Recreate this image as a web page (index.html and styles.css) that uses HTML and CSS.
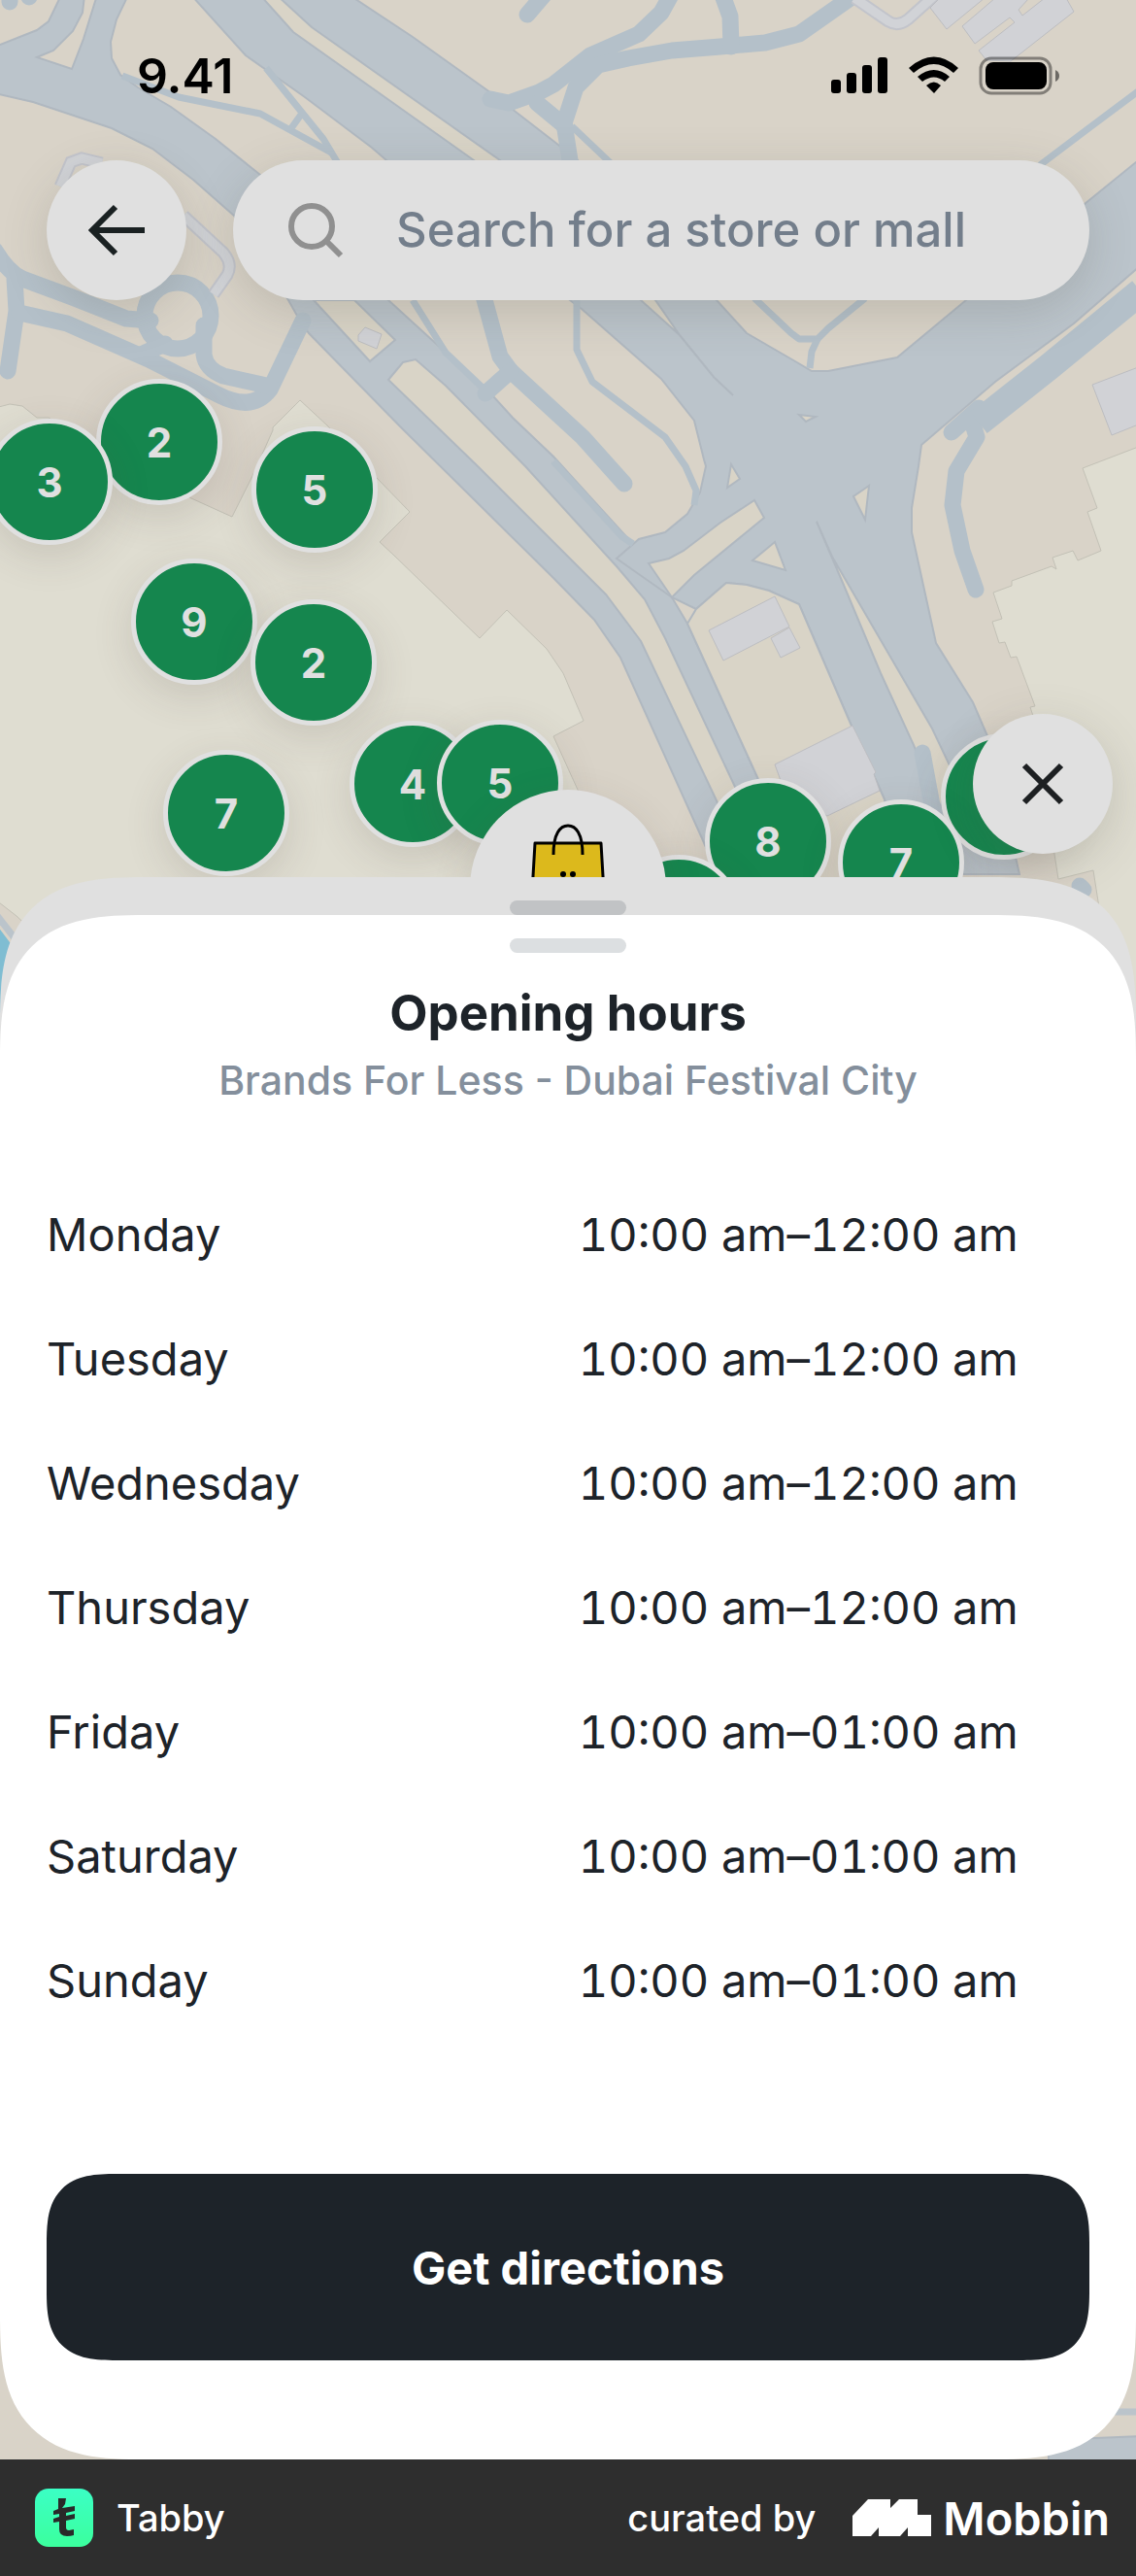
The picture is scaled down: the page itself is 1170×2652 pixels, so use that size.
FILE: index.html
```html
<!DOCTYPE html>
<html lang="en">
<head>
    <meta charset="UTF-8">
    <meta name="viewport" content="width=device-width, initial-scale=1.0">
    <title>Opening hours</title>
    <link rel="stylesheet" href="styles.css">
</head>
<body>
    <main class="screen">
        <div class="map">
            <svg class="map-art" viewBox="0 0 1170 2532" preserveAspectRatio="xMidYMin slice" aria-hidden="true">
                <!-- malls -->
                <g class="mall">
                    <path d="M-5 420L10 416L23 418L38 430L50 430L120 470L197 513L239 532L260 490L281 443V440L309 412L337 438L388 492L422 527L391 558L405 571L494 657L522 628L563 668L580 693L601 742L570 758L595 813L640 960H35L17 943L-5 926Z"/>
                    <path d="M1175 459L1115 482L1130 523L1120 527L1134 567L1110 577L1105 567L1084 574L1088 586L1083 583L1042 598V603L1023 610L1032 637L1022 640L1029 662L1035 661L1041 677L1047 676L1066 727L1061 728L1064 737L1090 905L1126 896L1136 960L1175 1100Z"/>
                </g>
                <!-- motorways -->
                <g class="road">
                    <path d="M-5 48L0 46L38 31L50 22L63 -5H87L85 13L75 32L55 52L38 59L74 71L86 40L100 -5H132L120 20L114 43L115 60L124 77L142 90L176 110L222 143L268 180L400 309L469 372L498 397L528 430L570 470L650 558L692 615L708 642L780 800L850 960H765L723 863L639 677L612 638L570 595L413 440L318 343L306 325L297 309L241 222L199 185L157 153L115 132L34 105L-5 96Z"/>
                    <path d="M197 -5L253 57L314 100L383 152L398 165L587 309L599 318L681 390L715 433L725 473L727 480L721 507L708 529L685 548L658 555L635 575L692 615L717 627L748 600L769 602L792 608L823 622L876 745L911 823L940 900H1050L1018 760L1002 723L964 662L939 548V523L946 480L949 458L1025 393L1106 333L1175 273V163L1117 210L995 309L924 368L853 382H836L819 372L769 343L738 309L593 163L509 98L425 38L360 -5Z"/>
                </g>
                <!-- islands between the carriageways -->
                <g class="island">
                    <path d="M268 -5L302 33L488 165L660 309L700 345L675 309L515 165L321 28L285 -5Z"/>
                    <path d="M323 309L381 372L407 350L365 309Z"/>
                    <path d="M400 391L415 373L428 370L459 397L541 480L635 583L664 617L685 657L757 810L820 960H800L736 820L660 660L624 612L570 558L492 480Z"/>
                    <path d="M668 580L689 575L704 567L742 538L777 515L787 533L715 592L692 615Z"/>
                    <path d="M708 642L717 627L748 600L769 602L792 608L823 622L876 745L911 823L930 960H850L780 800Z"/>
                    <path d="M841 537L857 573L960 750L979 790L968 833L941 767L907 693L868 600Z"/>
                    <path d="M753 478L762 493L749 502Z"/>
                    <path d="M895 500L879 511L891 535Z"/>
                    <path d="M798 558L775 577L809 587Z"/>
                    <path d="M823 427L840 429L830 434Z"/>
                </g>
                <path class="seam" d="M700 345L735 388L755 407"/>
                <!-- side streets -->
                <g class="street">
                    <path d="M-5 258Q8 280 23 287L77 307L130 328L155 330"/>
                    <path d="M15 287L17 320L8 382"/>
                    <path d="M20 322L69 333L153 370L226 407Q260 424 278 401L312 330"/>
                    <path d="M210 335V365Q212 380 230 387L279 398"/>
                    <path d="M145 365L170 354"/>
                    <circle cx="183" cy="325" r="34"/>
                    <path d="M498 305L515 367L526 382L600 450L643 498"/>
                    <path d="M526 382L500 405"/>
                    <path d="M691 -5L681 13L658 35L608 57L570 87L555 95L524 106L505 102"/>
                    <path d="M880 -5L823 35L788 44L742 48L692 52L647 60L616 67L593 90L581 127L587 165"/>
                    <path d="M744 -5L752 17L753 48"/>
                    <path d="M553 106L582 130"/>
                    <path d="M566 -12L543 15"/>
                    <path d="M10 -5V2M30 -5V-3"/>
                    <path d="M1003 440L1006 450L985 485L981 520L991 567L1005 607"/>
                    <path d="M1008 420L980 445"/>
                    <path d="M950 775L962 840"/>
                    <path class="wide" d="M1175 300L1080 378L1008 435"/>
                    <path d="M1112 912L1116 916"/>
                </g>
                <g class="lane">
                    <path d="M126 78L184 100L268 117L341 157"/>
                    <path d="M274 70L333 143L348 168"/>
                    <path d="M300 132L310 118"/>
                    <path d="M589 130L629 168"/>
                    <path d="M1071 170L1120 133L1175 92"/>
                    <path d="M777 307L815 343L823 349H842L853 338L891 307"/>
                    <path d="M842 349L836 362L834 379"/>
                    <path d="M594 309V360L610 393L685 450L706 480L717 505L715 520"/>
                    <path d="M425 309L459 363L498 400"/>
                    <path d="M570 475L640 552L652 560"/>
                </g>
                <!-- footpaths -->
                <g class="path-edge">
                    <path d="M62 192L73 167L84 163L105 168"/>
                    <path d="M189 222L230 260Q240 272 234 283L220 303"/>
                    <path d="M880 -2L915 22Q925 28 935 20L963 -5"/>
                </g>
                <g class="path-fill">
                    <path d="M62 192L73 167L84 163L105 168"/>
                    <path d="M189 222L230 260Q240 272 234 283L220 303"/>
                    <path d="M880 -2L915 22Q925 28 935 20L963 -5"/>
                </g>
                <!-- buildings -->
                <g class="building">
                    <path d="M958 8L968 -2H1014L975 30Z"/>
                    <path d="M991 27L1025 -2H1060L1049 10L1053 16L1076 -2H1098L1106 12L1041 63L1016 62L1008 52L1045 23L1040 18L1004 45Z"/>
                    <path d="M1125 396L1175 377V436L1145 448Z"/>
                    <path d="M730 649L798 614L813 645L745 680Z"/>
                    <path d="M794 657L813 646L824 667L804 677Z"/>
                    <path d="M798 787L878 747L902 795L900 797L906 814L852 840L810 820Z"/>
                    <path d="M369 345L376 337L393 344L388 359L369 351Z"/>
                </g>
                <!-- creek and the roads under the sheet corners -->
                <path class="water" d="M-5 950L25 990V1100H-5Z"/>
                <path class="quay" d="M-5 940L30 985"/>
                <path class="quay" d="M1100 2483H1175"/>
                <path class="road" d="M1080 2512L1175 2508V2540H1080Z"/>
            </svg>

            <button class="pin pin-a">2</button>
            <button class="pin pin-b">3</button>
            <button class="pin pin-c">5</button>
            <button class="pin pin-d">9</button>
            <button class="pin pin-e">2</button>
            <button class="pin pin-f">7</button>
            <button class="pin pin-g">4</button>
            <button class="pin pin-h">5</button>
            <button class="pin pin-i">8</button>
            <button class="pin pin-j" aria-label="Stores"></button>
            <button class="pin pin-k" aria-label="Stores"></button>
            <button class="pin pin-l">7</button>
            <button class="store-pin" aria-label="Brands For Less">
                <svg width="80" height="90" viewBox="0 0 80 90" aria-hidden="true">
                    <path d="M6 20H74L78 88H2Z" fill="#dcb91c" stroke="#000" stroke-width="3" stroke-linejoin="round"/>
                    <path d="M25 32C25 10 32 2 40 2S55 10 55 32" fill="none" stroke="#000" stroke-width="3"/>
                    <circle cx="35" cy="52" r="3"/>
                    <circle cx="45" cy="52" r="3"/>
                </svg>
            </button>
            <button class="round-button close" aria-label="Close">
                <svg width="48" height="48" viewBox="0 0 48 48" aria-hidden="true">
                    <path d="M5 5L43 43M43 5L5 43" fill="none" stroke="#1d2022" stroke-width="6"/>
                </svg>
            </button>
        </div>

        <header class="top">
            <div class="status">
                <span class="clock">9.41</span>
                <svg class="status-icons" width="238" height="40" viewBox="0 0 238 40" aria-hidden="true">
                    <rect x="1" y="24" width="10" height="14" rx="3"/>
                    <rect x="17" y="17" width="10" height="21" rx="3"/>
                    <rect x="33" y="9" width="10" height="29" rx="3"/>
                    <rect x="49" y="1" width="10" height="37" rx="3"/>
                    <path d="M81 12Q107 -11 132 12L127 17Q107 -1 86 17Z"/>
                    <path d="M90 21Q107 7 123 21L118 26Q107 17 95 26Z"/>
                    <path d="M99 30Q107 23 114 30L107 38Z"/>
                    <rect x="155" y="2" width="72" height="36" rx="11" fill="none" stroke="#000" stroke-opacity=".4" stroke-width="3"/>
                    <rect x="160" y="6" width="63" height="28" rx="8"/>
                    <path d="M232 14Q236 16 236 20T232 26Z" opacity=".5"/>
                </svg>
            </div>
            <div class="search-row">
                <button class="round-button" aria-label="Back">
                    <svg width="60" height="58" viewBox="0 0 60 58" aria-hidden="true">
                        <path d="M59 29H5M29 5L5 29L29 53" fill="none" stroke="#1a2122" stroke-width="6"/>
                    </svg>
                </button>
                <label class="search">
                    <svg width="58" height="58" viewBox="0 0 58 58" aria-hidden="true">
                        <circle cx="25" cy="25" r="21" fill="none" stroke="#909090" stroke-width="6"/>
                        <path d="M40 40L55 55" stroke="#909090" stroke-width="6"/>
                    </svg>
                    <input type="search" placeholder="Search for a store or mall" aria-label="Search for a store or mall">
                </label>
            </div>
        </header>

        <div class="under-sheet">
            <span class="handle"></span>
        </div>
        <section class="sheet">
            <span class="handle"></span>
            <h1>Opening hours</h1>
            <p class="place">Brands For Less - Dubai Festival City</p>
            <table class="hours">
                <tr>
                    <th scope="row">Monday</th>
                    <td>10:00 am–12:00 am</td>
                </tr>
                <tr>
                    <th scope="row">Tuesday</th>
                    <td>10:00 am–12:00 am</td>
                </tr>
                <tr>
                    <th scope="row">Wednesday</th>
                    <td>10:00 am–12:00 am</td>
                </tr>
                <tr>
                    <th scope="row">Thursday</th>
                    <td>10:00 am–12:00 am</td>
                </tr>
                <tr>
                    <th scope="row">Friday</th>
                    <td>10:00 am–01:00 am</td>
                </tr>
                <tr>
                    <th scope="row">Saturday</th>
                    <td>10:00 am–01:00 am</td>
                </tr>
                <tr>
                    <th scope="row">Sunday</th>
                    <td>10:00 am–01:00 am</td>
                </tr>
            </table>
            <button class="directions">Get directions</button>
        </section>
    </main>

    <footer class="credit">
        <svg width="60" height="60" viewBox="0 0 60 60" aria-hidden="true">
            <defs>
                <linearGradient id="mint" x1="0" y1="0" x2="0" y2="1">
                    <stop offset="0" stop-color="#3bffc5"/>
                    <stop offset="1" stop-color="#3bff9d"/>
                </linearGradient>
            </defs>
            <rect width="60" height="60" rx="14" fill="url(#mint)"/>
            <path d="M24 10H32L31 16L28 20L41 18V23L32 25V28L41 26V31L32 33V40Q32 43 35 43L40 42V48Q37 49 33 49Q25 49 25 42V34L19 35V31L25 29V26L19 27V23L24 21Z" fill="#292929"/>
        </svg>
        <span class="app-name">Tabby</span>
        <span class="curated">curated by</span>
        <svg width="81" height="38" viewBox="0 0 81 38" aria-hidden="true">
            <path d="M0 17L16 0H39V9L48 0H67V16H81V38H57V29L49 38H27V29L19 38H0Z" fill="#fff"/>
        </svg>
        <span class="brand">Mobbin</span>
    </footer>
</body>
</html>
```
FILE: styles.css
```css
* {
    box-sizing: border-box;
}
body {
    margin: 0;
    font-family: Inter, "Liberation Sans", sans-serif;
    color: #1d2329;
    background-color: #2e2e2e;
}
button {
    padding: 0;
    border: none;
    font-family: inherit;
    cursor: pointer;
}
.screen {
    position: relative;
    overflow: hidden;
    background-color: #d9d3c8;
}

/* map */
.map {
    position: absolute;
    inset: 0;
}
.map-art {
    display: block;
    width: 100%;
    height: 100%;
}
.mall {
    fill: #dfddd1;
    stroke: #c3c1b6;
}
.road {
    fill: #bbc4cb;
    stroke: #b0b8c0;
    stroke-width: 2;
}
.island {
    fill: #d9d4c7;
    stroke: #b0b8c0;
    stroke-width: 2;
}
.seam {
    fill: none;
    stroke: #b0b8c0;
    stroke-width: 2;
}
.street {
    fill: none;
    stroke: #b4c0c9;
    stroke-width: 17;
    stroke-linecap: round;
    stroke-linejoin: round;
}
.wide {
    stroke-width: 28;
    stroke-linecap: butt;
}
.lane {
    fill: none;
    stroke: #b4c0c9;
    stroke-width: 7;
    stroke-linejoin: round;
}
.path-edge {
    fill: none;
    stroke: #c2c4cb;
    stroke-width: 13;
}
.path-fill {
    fill: none;
    stroke: #d1d3d7;
    stroke-width: 9;
}
.building {
    fill: #d1d2d6;
    stroke: #bcbdc1;
}
.water {
    fill: #7fbdd2;
}
.quay {
    fill: none;
    stroke: #bbc4cb;
    stroke-width: 7;
}

.pin {
    position: absolute;
    width: 130px;
    height: 130px;
    border: 5px solid #e0e0e0;
    border-radius: 50%;
    background-color: #15864e;
    color: #e0e0e0;
    font-size: 42px;
    font-weight: 700;
    box-shadow: 0 12px 40px rgba(80, 70, 60, 0.16);
}
.pin-a { left: 99px; top: 390px; }
.pin-b { left: -14px; top: 431px; }
.pin-c { left: 259px; top: 439px; }
.pin-d { left: 135px; top: 575px; }
.pin-e { left: 258px; top: 617px; }
.pin-f { left: 168px; top: 772px; }
.pin-g { left: 360px; top: 742px; }
.pin-h { left: 450px; top: 741px; }
.pin-i { left: 726px; top: 801px; }
.pin-j { left: 634px; top: 880px; }
.pin-k { left: 969px; top: 755px; }
.pin-l { left: 863px; top: 823px; }
.store-pin {
    position: absolute;
    left: 484px;
    top: 813px;
    display: flex;
    justify-content: center;
    width: 202px;
    height: 202px;
    padding-top: 35px;
    border-radius: 50%;
    background-color: #e0e0e0;
    box-shadow: 0 12px 40px rgba(80, 70, 60, 0.16);
}
.round-button {
    display: flex;
    flex: none;
    align-items: center;
    justify-content: center;
    width: 144px;
    height: 144px;
    border-radius: 50%;
    background-color: #e0e0e0;
    box-shadow: 0 12px 48px rgba(80, 80, 70, 0.2);
}
.close {
    position: absolute;
    top: 735px;
    right: 24px;
}

/* status bar and search */
.top {
    position: relative;
    height: 903px;
    pointer-events: none;
}
.status {
    display: flex;
    align-items: center;
    justify-content: space-between;
    padding: 48px 77px 0 141px;
}
.clock {
    color: #000;
    font-size: 50px;
    font-weight: 600;
    line-height: 60px;
}
.search-row {
    display: flex;
    gap: 48px;
    padding: 57px 48px 0;
}
.search-row > * {
    pointer-events: auto;
}
.search {
    display: flex;
    flex: 1;
    align-items: center;
    gap: 54px;
    min-width: 0;
    height: 144px;
    padding: 0 56px;
    border-radius: 72px;
    background-color: #e0e0e0;
    box-shadow: 0 12px 48px rgba(80, 80, 70, 0.2);
}
.search svg {
    flex: none;
}
.search input {
    flex: 1;
    min-width: 0;
    padding: 0;
    border: none;
    outline: none;
    background: none;
    color: #1d2329;
    font-family: inherit;
    font-size: 49px;
    font-weight: 500;
    line-height: 60px;
}
.search input::placeholder {
    color: #737e8b;
    opacity: 1;
}

/* bottom sheets */
.under-sheet,
.sheet {
    position: relative;
    border-radius: 150px;
    corner-shape: superellipse(1.5);
}
.under-sheet {
    height: 320px;
    padding-top: 24px;
    background-color: #e0e0e0;
}
.handle {
    display: block;
    width: 120px;
    height: 15px;
    margin: 0 auto;
    border-radius: 8px;
    background-color: #dcdfe1;
}
.under-sheet .handle {
    background-color: #c1c3c5;
}
.sheet {
    margin-top: -281px;
    padding: 24px 48px 102px;
    background-color: #fff;
}
h1 {
    margin: 32px 0 13px;
    font-size: 51px;
    font-weight: 700;
    line-height: 60px;
    text-align: center;
}
.place {
    margin: 0;
    color: #848f9c;
    font-size: 41px;
    font-weight: 500;
    line-height: 52px;
    text-align: center;
}
.hours {
    width: 100%;
    margin: 68px 0 136px;
    border-collapse: collapse;
    font-size: 47px;
}
.hours th,
.hours td {
    height: 128px;
    padding: 0;
    font-weight: 400;
    text-align: left;
}
.hours th {
    width: 51%;
}
.hours td {
    font-variant-numeric: tabular-nums;
}
.directions {
    display: block;
    width: 100%;
    height: 192px;
    border-radius: 72px;
    corner-shape: superellipse(1.5);
    background-color: #1d2329;
    color: #fff;
    font-size: 47px;
    font-weight: 700;
}

/* footer */
.credit {
    display: flex;
    align-items: center;
    height: 120px;
    padding: 0 27px 0 36px;
    color: #fff;
}
.app-name,
.curated {
    font-size: 38px;
    font-weight: 500;
}
.app-name {
    margin-left: 24px;
}
.curated {
    margin: 0 38px 0 auto;
}
.brand {
    margin-left: 12px;
    font-size: 47px;
    font-weight: 600;
}
```
